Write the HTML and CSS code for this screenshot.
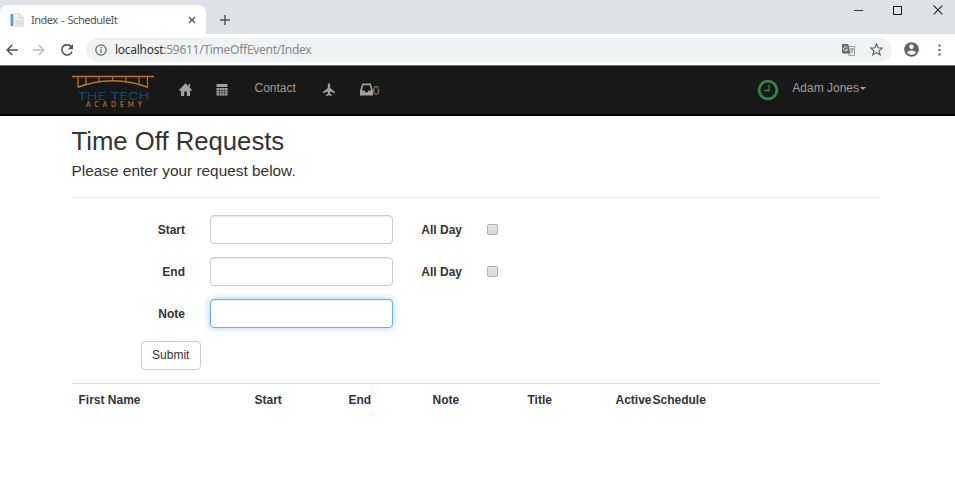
FILE: index.html
```html
<!DOCTYPE html>
<html lang="en">
<head>
<meta charset="utf-8">
<title>Index - ScheduleIt</title>
<link rel="stylesheet" href="styles.css">
</head>
<body>
<header class="browser">
  <div class="tabstrip">
    <div class="tab">
      <svg class="favicon" width="14" height="14" viewBox="0 0 14 14"><path d="M.5 1h3v12h-3z" fill="#4fa3c7"/><path d="M3.5.5h6l4 4v9h-10z" fill="#edf0f2" stroke="#d3d9dd" stroke-width=".8"/><path d="M9 1v4h4M6 9l2-2 2 2 2-1v3H6z" fill="#e0e4e7" stroke="#cdd4d8" stroke-width=".7"/></svg>
      <span class="tab-title">Index - ScheduleIt</span>
      <svg class="tab-close" width="8" height="8" viewBox="0 0 8 8"><path d="M1 1l6 6M7 1L1 7" stroke="#54575b" stroke-width="1.4"/></svg>
    </div>
    <svg class="new-tab" width="12" height="12" viewBox="0 0 12 12"><path d="M6 1v10M1 6h10" stroke="#505357" stroke-width="1.5"/></svg>
    <div class="window-controls">
      <svg width="9" height="10" viewBox="0 0 9 10"><path d="M0 5.5h9" stroke="#333" /></svg>
      <svg width="9" height="10" viewBox="0 0 9 10"><path d="M.5 1.500h8v8h-8z" fill="none" stroke="#111"/></svg>
      <svg width="10" height="10" viewBox="0 0 10 10"><path d="M.7.7l8.6 8.6M9.3.7L.7 9.3" stroke="#222" stroke-width="1.1"/></svg>
    </div>
  </div>
  <div class="toolbar">
    <svg class="back" width="12" height="12" viewBox="0 0 12 12"><path d="M12 6H1.2M6.2 1L1.2 6l5 5" fill="none" stroke="#505357" stroke-width="1.6"/></svg>
    <svg class="forward" width="12" height="12" viewBox="0 0 12 12"><path d="M0 6h10.8M5.8 1l5 5-5 5" fill="none" stroke="#b9bbbe" stroke-width="1.5"/></svg>
    <svg class="reload" width="12" height="12" viewBox="0 0 12 12"><path d="M10.2 2.6A5.2 5.2 0 1 0 11 7.5" fill="none" stroke="#505357" stroke-width="1.6"/><path d="M12 0v5.2H6.8z" fill="#505357"/></svg>
    <div class="address">
      <svg width="12" height="12" viewBox="0 0 12 12"><circle cx="6" cy="6" r="5.2" fill="none" stroke="#5f6368" stroke-width="1.2"/><path d="M6 5.3v3.6M6 3v1.3" stroke="#5f6368" stroke-width="1.3"/></svg>
      <span class="url"><b>localhost</b>:59611/TimeOffEvent/Index</span>
      <svg class="translate" width="13" height="12" viewBox="0 0 13 12"><path d="M5 2.5h7.5v9H7z" fill="#f1f3f4" stroke="#85898d" stroke-width=".8"/><path d="M0 0h6.2l2.3 9.5H1q-1 0-1-1z" fill="#66696d"/><path d="M5.4 3.5A2.1 2.1 0 1 0 5.7 5.4H4" fill="none" stroke="#eef1f2"/><path d="M8 5h4M10 4v1M11 5q-.6 2.5-2.5 3.7M8.800 6.500l2.600 2.500" fill="none" stroke="#777b7f" stroke-width=".8"/></svg>
      <svg class="star" width="13" height="13" viewBox="0 0 13 13"><path d="M6.5 1l1.6 3.8 4.1.3-3.1 2.700 1 4-3.600-2.200-3.600 2.200 1-4L.8 5.100l4.100-.3z" fill="none" stroke="#5f6368" stroke-width="1.2"/></svg>
    </div>
    <svg class="profile" width="15" height="15" viewBox="0 0 15 15"><circle cx="7.5" cy="7.5" r="7.3" fill="#5f6368"/><circle cx="7.5" cy="4.8" r="2.3" fill="#fff"/><path d="M3 10.8C4 7.8 11 7.8 12 10.8 10 13.4 5 13.4 3 10.8z" fill="#fff"/></svg>
    <svg class="more" width="3" height="12" viewBox="0 0 3 12"><path d="M.4.4h2.2v2.2H.4zM.4 4.9h2.2v2.2H.4zM.4 9.4h2.2v2.2H.4z" fill="#5f6368"/></svg>
  </div>
</header>
<nav class="navbar">
  <svg class="logo" width="84" height="36" viewBox="0 0 84 36">
    <path d="M1 2.500h82" stroke="#b9722f" stroke-width="1.500"/>
    <path d="M7 3v10.500M15 3v7.500M28 3v4M41.500 3v3M55 3v4M68 3v7.500M76.500 3v10.500" stroke="#b9722f" stroke-width="1.200"/>
    <path d="M7 13.300C28 4.500 55 4.500 76.500 13.300" fill="none" stroke="#b9722f" stroke-width="1.500"/>
    <text class="logo-name" x="6.500" y="25.500" textLength="72" lengthAdjust="spacingAndGlyphs">THE TECH</text>
    <text class="logo-sub" x="15" y="33.300" textLength="56">ACADEMY</text>
  </svg>
  <svg class="home" width="13" height="13" viewBox="0 0 13 13"><path d="M6.5.3L13 7l-.8.7H11V13H7.800V8.500H5.200V13H2V7.700H.8L0 7z" fill="#a0a0a0"/><path d="M9.500 1h1.600v3H9.500z" fill="#a0a0a0"/></svg>
  <svg class="calendar" width="12" height="13" viewBox="0 0 12 13"><path d="M.5 1h11v3H.5zM.5 5h11v7.500H.5z" fill="#a0a0a0"/><path d="M1 7.500h10M1 9.800h10M3.500 5.500v6.500M6 5.500v6.500M8.500 5.500v6.500" stroke="#191919" stroke-width=".5"/></svg>
  <span class="contact">Contact</span>
  <svg class="plane" width="12" height="13" viewBox="0 0 12 13"><path d="M6 0q1.200.8 1.200 2.200V5L12 9v1.200L7.200 8.500 7 10.600l2 1.500v.8L6 12.300l-3 .6v-.8l2-1.500-.2-2.100L0 10.200V9l4.800-4V2.200Q4.800.8 6 0z" fill="#a0a0a0"/></svg>
  <span class="inbox"><svg width="13" height="13" viewBox="0 0 13 13"><path fill-rule="evenodd" d="M2.200.5h8.600L13 7.500v5H0v-5zM3.300 2.200L1.900 7.500h2.500L5.200 9.300h2.600l.8-1.800h2.500L9.700 2.200z" fill="#a0a0a0"/></svg><span class="count">0</span></span>
  <svg class="clock" width="22" height="22" viewBox="0 0 22 22"><circle cx="11" cy="11" r="8.900" fill="none" stroke="#318348" stroke-width="2.800"/><path d="M12 5.500v6H7.200" fill="none" stroke="#318348" stroke-width="1.300"/></svg>
  <span class="user">Adam Jones<i class="caret"></i></span>
</nav>
<main class="page">
  <h1>Time Off Requests</h1>
  <p class="lead">Please enter your request below.</p>
  <form class="request">
    <div class="row"><label for="start">Start</label><input class="field" id="start" type="text"><label class="all-day">All Day</label><span class="check"></span></div>
    <div class="row"><label for="end">End</label><input class="field" id="end" type="text"><label class="all-day">All Day</label><span class="check"></span></div>
    <div class="row"><label for="note">Note</label><input class="field active" id="note" type="text"></div>
    <button class="submit" type="button">Submit</button>
  </form>
  <div class="table-head"><span>First Name</span><span>Start</span><span>End</span><span>Note</span><span>Title</span><span>Active</span><span>Schedule</span></div>
</main>
</body>
</html>
```
FILE: styles.css
```css
* { box-sizing: border-box; }
body { margin: 0; height: 493px; overflow: hidden; background: #fff; color: #333; font: 12px/17px "Liberation Sans", Arial, sans-serif; }
svg { display: block; flex: none; }

.tabstrip { display: flex; height: 34px; background: #dee1e6; }
.tab { display: flex; align-items: center; width: 206px; height: 29px; margin-top: 5px; padding: 0 10px; background: #fff; border-radius: 7px 7px 0 0; }
.tab-title { margin-left: 7px; font: 11px/17px "Noto Sans", sans-serif; letter-spacing: -.48px; word-spacing: 1px; color: #505357; white-space: nowrap; }
.tab-close { margin-left: auto; }
.new-tab { margin: 14px 0 0 13px; }
.window-controls { display: flex; gap: 31px; margin: 5px 12px 0 auto; }
.window-controls svg:first-child { margin-right: -1px; }
.toolbar { display: flex; align-items: center; height: 32px; padding: 0 14px 0 6px; border-bottom: 1px solid #777; }
.forward { margin-left: 15px; }
.reload { margin-left: 16px; }
.address { display: flex; align-items: center; flex: 1; height: 24px; margin-left: 13px; padding: 0 9px; border-radius: 12px; background: #eff3f4; }
.url { margin-left: 8px; font: 12px/20px "Noto Sans", sans-serif; letter-spacing: -.27px; color: #85898c; white-space: nowrap; }
.url b { font-weight: 400; color: #333; }
.translate { margin-left: auto; }
.star { margin-left: 15px; }
.profile { margin-left: 12px; }
.more { margin-left: 19px; }

.navbar { display: flex; height: 50px; padding-left: 71px; background: #181818; border-bottom: 2px solid #000; color: #9d9d9d; }
.logo { margin-top: 8px; }
.logo-name { font: 10.5px "Inter", sans-serif; fill: #0d4a75; }
.logo-sub { font: 700 6.5px/1 "Lato", sans-serif; fill: #a8692e; }
.home { margin: 17px 0 0 24px; }
.calendar { margin: 17px 0 0 24px; }
.contact { margin: 14px 0 0 26.5px; }
.plane { margin: 17px 0 0 27px; }
.inbox { display: flex; margin: 17px 0 0 25px; }
.count { color: #888; }
.clock { margin: 13px 0 0 auto; }
.user { display: flex; align-items: center; height: 17px; margin: 14px 89px 0 13px; }
.caret { margin-left: 1px; border: 3.8px solid transparent; border-top-color: #9d9d9d; border-bottom: 0; }

.page { width: 808.5px; margin-left: 71.5px; }
h1 { margin: 0; padding-top: 10px; font-size: 25.7px; line-height: 30px; font-weight: 400; }
.lead { margin: 0; padding: 5px 0 16px; height: 42px; border-bottom: 1px solid #eee; font-size: 15.4px; line-height: 20px; }
.request { padding-top: 17px; }
.row { display: flex; align-items: center; height: 29px; margin-bottom: 13px; }
.row label { width: 113.5px; padding-top: 1px; text-align: right; font-weight: 700; }
.field { width: 183px; height: 29px; margin: 0 0 0 25px; border: 1px solid #ccc; border-radius: 4px; outline: 0; box-shadow: inset 0 1px 1px rgba(0,0,0,.075); }
.field.active { border-color: #66afe9; box-shadow: inset 0 1px 1px rgba(0,0,0,.075), 0 0 7px rgba(102,175,233,.6); }
.row .all-day { width: 69px; }
.check { width: 11px; height: 11px; margin-left: 25px; border: 1px solid #b0b0b0; border-radius: 2px; background: linear-gradient(#e6e6e6, #d9d9d9); }
.submit { display: block; width: 60.5px; height: 29px; margin: 0 0 13px 69px; padding: 0; border: 1px solid #ccc; border-radius: 4px; background: #fff; color: #333; font: inherit; }
.table-head { display: grid; grid-template-columns: 176px 94px 84px 95px 88px 37px 1fr; padding: 8px 0 0 7px; border-top: 1px solid #ddd; font-weight: 700; }
```
